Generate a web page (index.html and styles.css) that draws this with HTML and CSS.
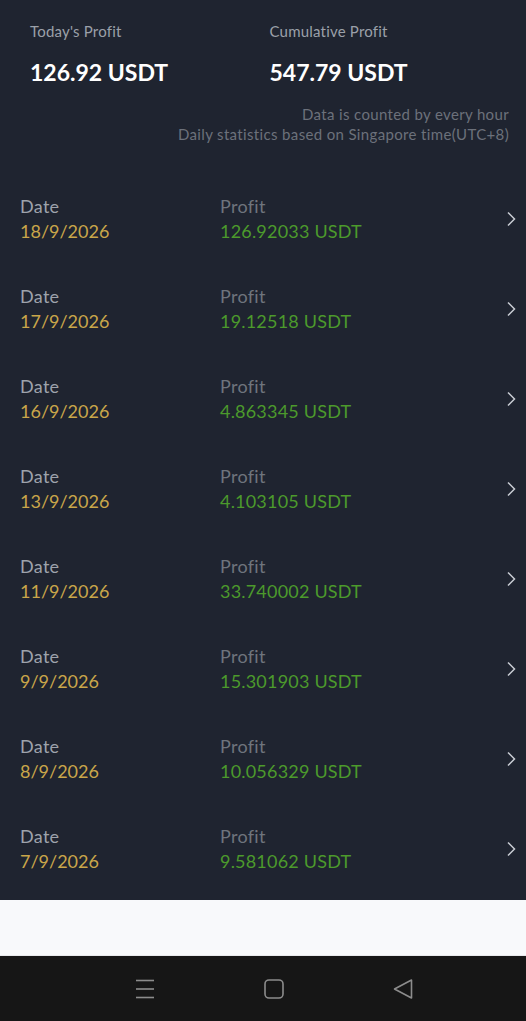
FILE: index.html
```html
<!DOCTYPE html>
<html lang="en">

<head>
    <meta charset="UTF-8">
    <meta name="viewport" content="width=device-width, initial-scale=1.0">
    <title>Profit Records</title>
    <link rel="stylesheet" href="styles.css">
</head>

<body>
    <div class="screen">
        <div class="summary">
            <div class="totals">
                <div class="total">
                    <div class="total-label">Today's Profit</div>
                    <div class="total-value">126.92 USDT</div>
                </div>
                <div class="total">
                    <div class="total-label">Cumulative Profit</div>
                    <div class="total-value">547.79 USDT</div>
                </div>
            </div>
            <div class="notes">
                <div>Data is counted by every hour</div>
                <div>Daily statistics based on Singapore time(UTC+8)</div>
            </div>
        </div>

        <ul class="records">
            <li class="record">
                <div class="cell cell-date"><span class="label">Date</span><span class="date">18/9/2026</span></div>
                <div class="cell"><span class="label label-dim">Profit</span><span class="profit">126.92033 USDT</span></div>
                <svg class="chevron" width="10" height="16" viewBox="0 0 10 16"><polyline points="2,1.5 8.5,8 2,14.5" /></svg>
            </li>
            <li class="record">
                <div class="cell cell-date"><span class="label">Date</span><span class="date">17/9/2026</span></div>
                <div class="cell"><span class="label label-dim">Profit</span><span class="profit">19.12518 USDT</span></div>
                <svg class="chevron" width="10" height="16" viewBox="0 0 10 16"><polyline points="2,1.5 8.5,8 2,14.5" /></svg>
            </li>
            <li class="record">
                <div class="cell cell-date"><span class="label">Date</span><span class="date">16/9/2026</span></div>
                <div class="cell"><span class="label label-dim">Profit</span><span class="profit">4.863345 USDT</span></div>
                <svg class="chevron" width="10" height="16" viewBox="0 0 10 16"><polyline points="2,1.5 8.5,8 2,14.5" /></svg>
            </li>
            <li class="record">
                <div class="cell cell-date"><span class="label">Date</span><span class="date">13/9/2026</span></div>
                <div class="cell"><span class="label label-dim">Profit</span><span class="profit">4.103105 USDT</span></div>
                <svg class="chevron" width="10" height="16" viewBox="0 0 10 16"><polyline points="2,1.5 8.5,8 2,14.5" /></svg>
            </li>
            <li class="record">
                <div class="cell cell-date"><span class="label">Date</span><span class="date">11/9/2026</span></div>
                <div class="cell"><span class="label label-dim">Profit</span><span class="profit">33.740002 USDT</span></div>
                <svg class="chevron" width="10" height="16" viewBox="0 0 10 16"><polyline points="2,1.5 8.5,8 2,14.5" /></svg>
            </li>
            <li class="record">
                <div class="cell cell-date"><span class="label">Date</span><span class="date">9/9/2026</span></div>
                <div class="cell"><span class="label label-dim">Profit</span><span class="profit">15.301903 USDT</span></div>
                <svg class="chevron" width="10" height="16" viewBox="0 0 10 16"><polyline points="2,1.5 8.5,8 2,14.5" /></svg>
            </li>
            <li class="record">
                <div class="cell cell-date"><span class="label">Date</span><span class="date">8/9/2026</span></div>
                <div class="cell"><span class="label label-dim">Profit</span><span class="profit">10.056329 USDT</span></div>
                <svg class="chevron" width="10" height="16" viewBox="0 0 10 16"><polyline points="2,1.5 8.5,8 2,14.5" /></svg>
            </li>
            <li class="record">
                <div class="cell cell-date"><span class="label">Date</span><span class="date">7/9/2026</span></div>
                <div class="cell"><span class="label label-dim">Profit</span><span class="profit">9.581062 USDT</span></div>
                <svg class="chevron" width="10" height="16" viewBox="0 0 10 16"><polyline points="2,1.5 8.5,8 2,14.5" /></svg>
            </li>
        </ul>

        <div class="footer-space"></div>

        <nav class="navbar">
            <svg width="20" height="20" viewBox="0 0 20 20" class="nav-icon">
                <line x1="1" y1="1.5" x2="19" y2="1.5" />
                <line x1="1" y1="10" x2="19" y2="10" />
                <line x1="1" y1="18.5" x2="19" y2="18.5" />
            </svg>
            <svg width="20" height="20" viewBox="0 0 20 20" class="nav-icon">
                <rect x="1" y="1" width="18" height="18" rx="4" />
            </svg>
            <svg width="20" height="20" viewBox="0 0 20 20" class="nav-icon">
                <polygon points="18.5,1 18.5,19 1.5,10" stroke-linejoin="round" />
            </svg>
        </nav>
    </div>
</body>

</html>
```

FILE: styles.css
```css
body {
    margin: 0;
    padding: 0;
    font-family: Lato, "Noto Sans", sans-serif;
    background-color: #1f2430;
}

.screen {
    width: 526px;
    height: 1021px;
    display: flex;
    flex-direction: column;
    background-color: #1f2430;
}

.summary {
    padding: 21px 17px 0 30px;
}

.totals {
    display: flex;
}

.total {
    width: 240px;
}

.total-label {
    font-size: 15px;
    line-height: 20px;
    letter-spacing: 0.2px;
    color: #9ba0a9;
}

.total-value {
    margin-top: 16px;
    font-size: 23px;
    line-height: 30px;
    font-weight: 700;
    color: #ffffff;
}

.notes {
    margin-top: 17px;
    text-align: right;
    font-size: 15px;
    line-height: 20px;
    letter-spacing: 0.35px;
    color: #6c717b;
}

.records {
    list-style: none;
    margin: 30px 0 0;
    padding: 0;
}

.record {
    display: flex;
    align-items: center;
    height: 90px;
    padding: 0 10px 0 20px;
    box-sizing: border-box;
}

.cell {
    display: flex;
    flex-direction: column;
    font-size: 18px;
    line-height: 25px;
    flex: 1;
}

.cell-date {
    flex: 0 0 200px;
}

.label {
    color: #9ea3ac;
    letter-spacing: 0.3px;
}

.label-dim {
    color: #6f747d;
}

.date {
    color: #c9a64a;
}

.profit {
    color: #4c9a2c;
    letter-spacing: 0.2px;
}

.chevron {
    fill: none;
    stroke: #c9ccd3;
    stroke-width: 1.5;
}

.footer-space {
    height: 55px;
    margin-top: auto;
    background-color: #f8f9fb;
    border-bottom: 1px solid #e8e9ec;
}

.navbar {
    height: 65px;
    display: flex;
    justify-content: center;
    align-items: center;
    gap: 109px;
    padding-left: 22px;
    background-color: #161616;
}

.nav-icon {
    fill: none;
    stroke: #8c8c8c;
    stroke-width: 1.6;
}
```
